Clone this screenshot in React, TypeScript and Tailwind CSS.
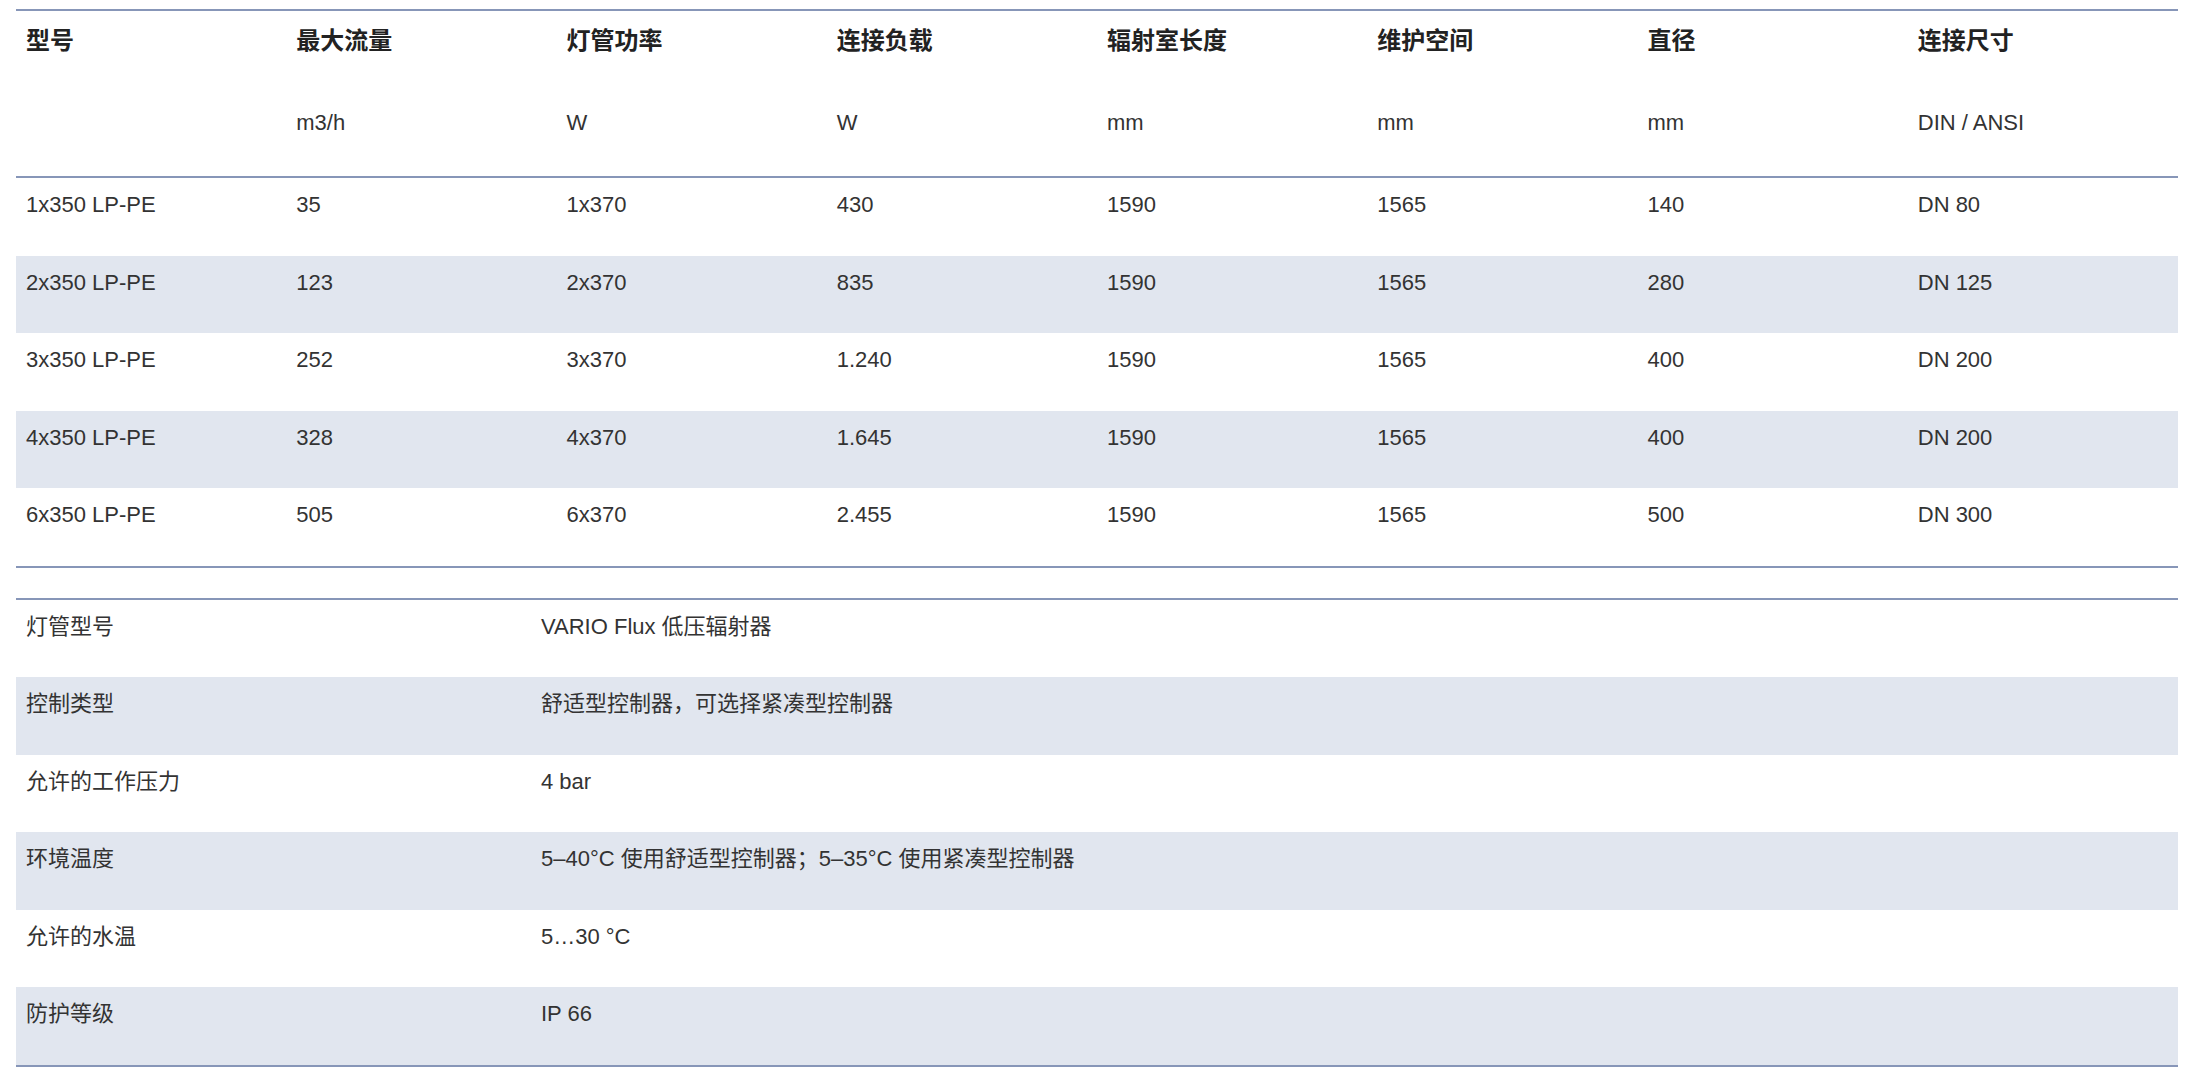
import React from "react";

const font = { fontFamily: '"Liberation Sans", Arial, "Noto Sans CJK SC", sans-serif' };

const heads = ["型号", "最大流量", "灯管功率", "连接负载", "辐射室长度", "维护空间", "直径", "连接尺寸"];
const units = ["", "m3/h", "W", "W", "mm", "mm", "mm", "DIN / ANSI"];
const rows = [
  ["1x350 LP-PE", "35", "1x370", "430", "1590", "1565", "140", "DN 80"],
  ["2x350 LP-PE", "123", "2x370", "835", "1590", "1565", "280", "DN 125"],
  ["3x350 LP-PE", "252", "3x370", "1.240", "1590", "1565", "400", "DN 200"],
  ["4x350 LP-PE", "328", "4x370", "1.645", "1590", "1565", "400", "DN 200"],
  ["6x350 LP-PE", "505", "6x370", "2.455", "1590", "1565", "500", "DN 300"],
];
const specs = [
  ["灯管型号", "VARIO Flux 低压辐射器"],
  ["控制类型", "舒适型控制器，可选择紧凑型控制器"],
  ["允许的工作压力", "4 bar"],
  ["环境温度", "5–40°C 使用舒适型控制器；5–35°C 使用紧凑型控制器"],
  ["允许的水温", "5…30 °C"],
  ["防护等级", "IP 66"],
];

export default function App() {
  return (
    <div className="bg-white w-[2193px] h-[1083px] text-[#333] text-[22px]" style={font}>
      <div className="ml-[16px] mr-[15px] pt-[9px]">
        <div className="border-t-2 border-b-2 border-[#8796b8]">
          <div className="grid grid-cols-8 h-[165px]">
            {heads.map((h, i) => (
              <div key={i} className="px-[10px] pt-[14px]">
                <div className="font-bold leading-[32px] text-[24px] text-[#222]">{h}</div>
                <div className="mt-[50px] leading-[32px]">{units[i]}</div>
              </div>
            ))}
          </div>
          <div className="border-t-2 border-[#8796b8]">
            {rows.map((r, ri) => (
              <div key={ri} className={`grid grid-cols-8 h-[77.6px] ${ri % 2 ? "bg-[#e1e6ef]" : ""}`}>
                {r.map((c, ci) => (
                  <div key={ci} className="px-[10px] pt-[11px] leading-[32px]">{c}</div>
                ))}
              </div>
            ))}
          </div>
        </div>
        <div className="mt-[30px] border-t-2 border-b-2 border-[#8796b8]">
          {specs.map((s, i) => (
            <div key={i} className={`flex h-[77.5px] ${i % 2 ? "bg-[#e1e6ef]" : ""}`}>
              <div className="w-[525px] px-[10px] pt-[11px] leading-[32px]">{s[0]}</div>
              <div className="pt-[11px] leading-[32px]">{s[1]}</div>
            </div>
          ))}
        </div>
      </div>
    </div>
  );
}
